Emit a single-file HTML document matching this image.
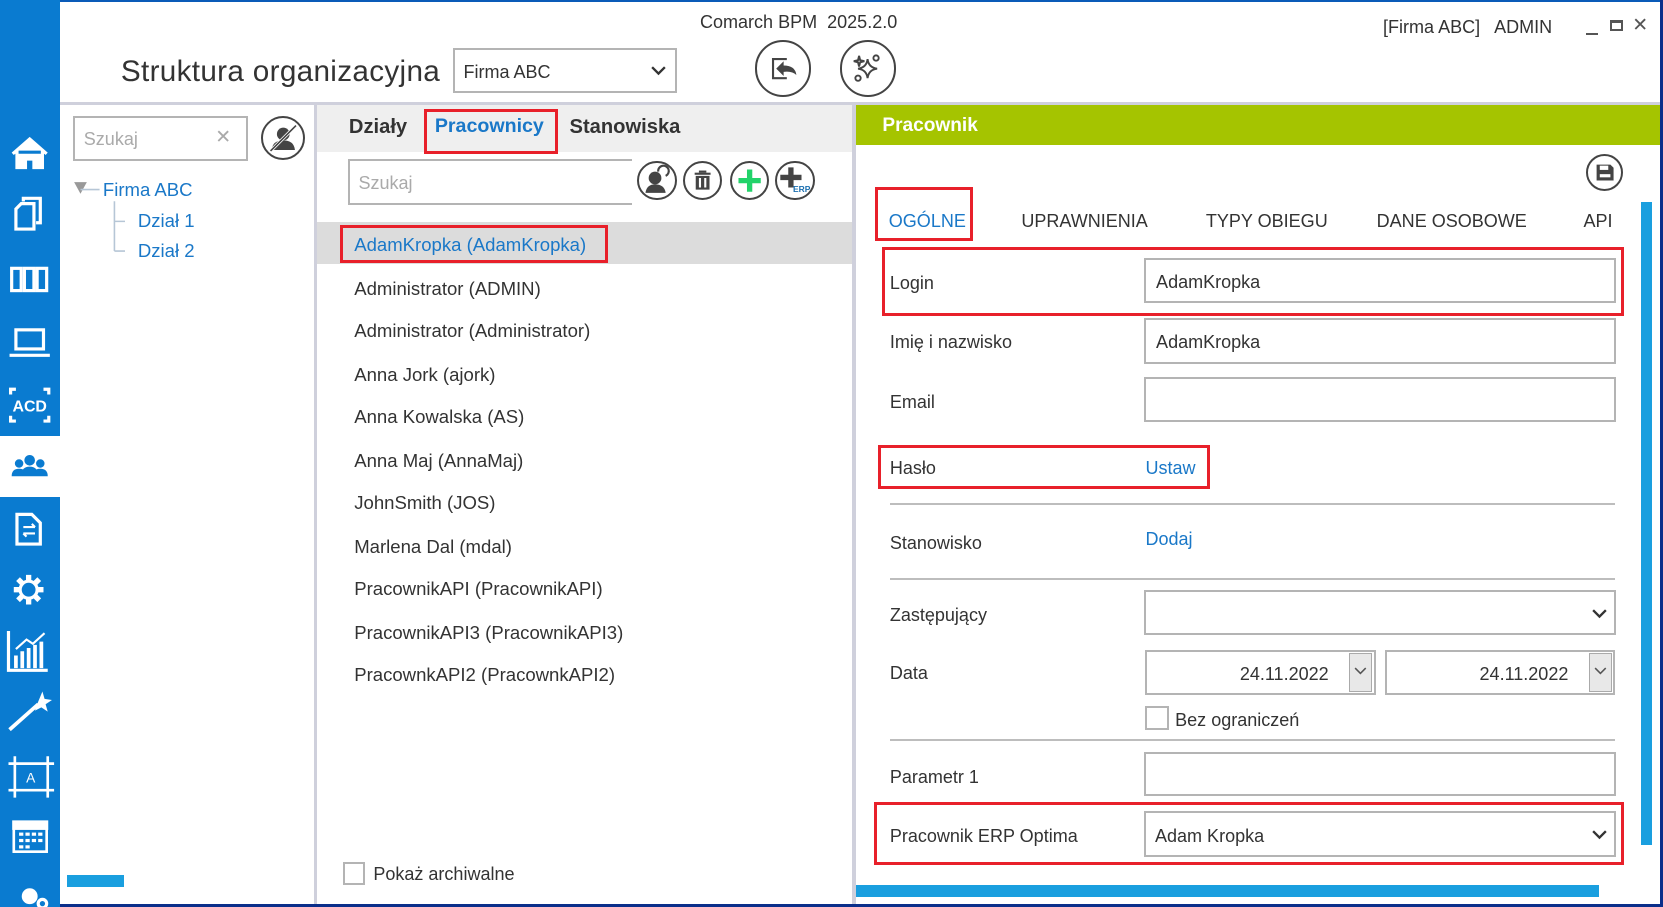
<!DOCTYPE html>
<html><head><meta charset="utf-8">
<style>
html,body{margin:0;padding:0;width:1663px;height:907px;overflow:hidden;background:#fff;}
#w{position:relative;width:1568px;height:855px;zoom:1.0606;font-family:"Liberation Sans",sans-serif;color:#333;overflow:hidden;background:#fff;}
.a{position:absolute;}
.t{position:absolute;white-space:nowrap;line-height:1;}
.inp{position:absolute;border:2px solid #b4b4b4;box-sizing:border-box;background:#fff;}
.red{position:absolute;border:3px solid #e8202a;box-sizing:border-box;}
.circ{position:absolute;border:2px solid #444;border-radius:50%;box-sizing:border-box;background:#fff;}
.lbl{position:absolute;font-size:17px;color:#333;white-space:nowrap;}
.hr{position:absolute;height:2px;background:#bdbdbd;left:839px;width:684px;}
.li{position:absolute;left:334px;font-size:17.5px;color:#333;white-space:nowrap;}
</style></head><body><div id="w">
<div class="a" style="left:0;top:0;width:1568px;height:2px;background:#0a5bb8"></div>
<div class="a" style="left:0;top:852px;width:1568px;height:3px;background:#0a2e8a"></div>
<div class="a" style="left:1565px;top:0;width:3px;height:855px;background:#0a2e8a"></div>
<div class="a" style="left:0;top:0;width:57px;height:855px;background:#0a7bd0"></div>
<div class="a" style="left:0;top:411px;width:57px;height:58px;background:#fff"></div>
<svg class="a" style="left:0;top:0" width="57" height="855" fill="none" stroke="#fff" stroke-width="3">
<path d="M12 145 L28 131 L44 145 M16 142 V158 H24 V150 H32 V158 H40 V142" fill="#fff"/>
<path d="M15 197 L20 192 H32 V216 H15 Z"/><path d="M22 190 V187 H38 V210 H34"/>
<rect x="11" y="253" width="9" height="21"/><rect x="23" y="253" width="9" height="21"/><rect x="35" y="253" width="9" height="21"/>
<rect x="15" y="311" width="26" height="18"/><path d="M9 335 H47"/>
<path d="M10 372 V367 H15 M41 367 H46 V372 M10 392 V397 H15 M41 397 H46 V392"/>
<text x="28" y="388" fill="#fff" stroke="none" font-size="15" font-weight="bold" font-family="Liberation Sans" text-anchor="middle">ACD</text>
<g fill="#0a7bd0" stroke="none"><circle cx="28" cy="434" r="5"/><circle cx="18" cy="437" r="4"/><circle cx="38" cy="437" r="4"/><path d="M20 449 Q20 440 28 440 Q36 440 36 449Z"/><path d="M11 449 Q11 442 18 442 Q22 442 23 444 L20 449Z"/><path d="M45 449 Q45 442 38 442 Q34 442 33 444 L36 449Z"/></g>
<path d="M16 485 H30 L38 493 V513 H16 Z"/><path d="M22 497 H33 M30 494 L33 497 M33 503 H22 M25 506 L22 503" stroke-width="2"/>
<circle cx="27" cy="556" r="8"/><path d="M27 542 V547 M27 565 V570 M13 556 H18 M36 556 H41 M17 546 L21 550 M33 562 L37 566 M17 566 L21 562 M33 550 L37 546" stroke-width="5"/>
<path d="M8 595 V632 H45"/><path d="M15 630 V618 M21 630 V614 M27 630 V611 M33 630 V608 M39 630 V605" stroke-width="3.5"/><path d="M15 612 L25 603 L31 607 L42 597" stroke-width="2"/>
<path d="M9 688 L36 664" stroke-width="3.5"/><path d="M40 652 L42 659 L49 660 L43 664 L45 671 L39 667 L33 670 L35 664 Z" fill="#fff" stroke="none"/>
<path d="M8 720 H51 M8 745 H51 M14 713 V752 M45 713 V752" stroke-width="2.5"/><text x="29" y="738" fill="#fff" stroke="none" font-size="13" font-family="Liberation Sans" text-anchor="middle">A</text>
<rect x="13" y="775" width="31" height="28" stroke-width="2.5"/><rect x="13" y="775" width="31" height="6" fill="#fff"/>
<g fill="#fff" stroke="none"><rect x="18" y="785" width="4" height="3"/><rect x="24" y="785" width="4" height="3"/><rect x="30" y="785" width="4" height="3"/><rect x="36" y="785" width="4" height="3"/><rect x="18" y="791" width="4" height="3"/><rect x="24" y="791" width="4" height="3"/><rect x="30" y="791" width="4" height="3"/><rect x="36" y="791" width="4" height="3"/><rect x="18" y="797" width="4" height="3"/><rect x="24" y="797" width="4" height="3"/></g>
<circle cx="28" cy="845" r="6" fill="#fff"/><circle cx="40" cy="852" r="4"/>
</svg>
<div class="t" style="left:660px;top:12px;font-size:17px;color:#333">Comarch BPM&nbsp; 2025.2.0</div>
<div class="t" style="left:114px;top:54px;font-size:28px;color:#333;letter-spacing:0.3px">Struktura organizacyjna</div>
<div class="inp" style="left:427px;top:45px;width:211px;height:43px"></div>
<div class="t" style="left:437px;top:59px;font-size:17px">Firma ABC</div>
<svg class="a" style="left:613px;top:60px" width="16" height="12"><path d="M2 3 L8 9 L14 3" stroke="#333" stroke-width="2.2" fill="none"/></svg>
<div class="circ" style="left:712px;top:38px;width:53px;height:53px"></div>
<svg class="a" style="left:712px;top:38px" width="53" height="53" fill="none" stroke="#444" stroke-width="2"><path d="M30 18 H17 V36 H30"/><path d="M20 27 L27 20 V24 Q38 24 39 33 Q35 29 27 30 V34 Z" fill="#444" stroke="none"/></svg>
<div class="circ" style="left:792px;top:38px;width:53px;height:53px"></div>
<svg class="a" style="left:792px;top:38px" width="53" height="53" fill="none" stroke="#444" stroke-width="1.8"><path d="M26 18 Q27 26 35 27 Q27 28 26 36 Q25 28 17 27 Q25 26 26 18Z"/><circle cx="34" cy="17" r="2.5"/><circle cx="17" cy="36" r="2.5"/><path d="M18 15 L19 19 L23 20 L19 21 L18 25 L17 21 L13 20 L17 19Z"/></svg>
<div class="t" style="left:1304px;top:17px;font-size:17px">[Firma ABC]&nbsp;&nbsp; ADMIN</div>
<div class="a" style="left:1495px;top:31px;width:12px;height:2px;background:#555"></div>
<div class="a" style="left:1518px;top:19px;width:12px;height:10px;border:2px solid #555;border-top-width:3px;box-sizing:border-box"></div>
<div class="t" style="left:1539px;top:15px;font-size:18px;color:#555">✕</div>
<div class="a" style="left:57px;top:96px;width:1508px;height:3px;background:#cfd0dc"></div>
<div class="a" style="left:296px;top:99px;width:3px;height:753px;background:#cfd0dc"></div>
<div class="a" style="left:803px;top:99px;width:4px;height:753px;background:#cfd0dc"></div>
<div class="inp" style="left:69px;top:109px;width:165px;height:43px"></div>
<div class="t" style="left:79px;top:123px;font-size:17px;color:#aaa">Szukaj</div>
<div class="t" style="left:203px;top:121px;font-size:18px;color:#aaa">✕</div>
<div class="circ" style="left:246px;top:109px;width:42px;height:42px"></div>
<svg class="a" style="left:246px;top:109px" width="42" height="42"><circle cx="21" cy="17" r="6" fill="#444"/><path d="M10 32 Q11 23 21 23 Q31 23 32 32Z" fill="#444"/><path d="M9 33 L33 9" stroke="#fff" stroke-width="3"/><path d="M9 33 L33 9" stroke="#444" stroke-width="1.5"/></svg>
<svg class="a" style="left:68px;top:170px" width="50" height="70" fill="none" stroke="#b6c6d6" stroke-width="1.5"><path d="M2 2 H14 L8 13Z" fill="#999" stroke="none"/><path d="M8 9 H26"/><path d="M40 20 V67 M40 39 H60 M40 67 H60"/></svg>
<div class="t" style="left:97px;top:171px;font-size:17.5px;color:#1a78c8">Firma ABC</div>
<div class="t" style="left:130px;top:200px;font-size:17.5px;color:#1a78c8">Dział 1</div>
<div class="t" style="left:130px;top:228px;font-size:17.5px;color:#1a78c8">Dział 2</div>
<div class="a" style="left:63px;top:825px;width:54px;height:11px;background:#1a9fdf"></div>
<div class="a" style="left:299px;top:99px;width:504px;height:44px;background:#efefef"></div>
<div class="t" style="left:329px;top:110px;font-size:19px;font-weight:bold;color:#333">Działy</div>
<div class="t" style="left:410px;top:110px;font-size:18.5px;font-weight:bold;color:#1a78c8">Pracownicy</div>
<div class="t" style="left:537px;top:110px;font-size:19px;font-weight:bold;color:#333">Stanowiska</div>
<div class="red" style="left:400px;top:103px;width:126px;height:42px"></div>
<div class="inp" style="left:328px;top:150px;width:268px;height:43px;border-right:none"></div>
<div class="t" style="left:338px;top:164px;font-size:17px;color:#aaa">Szukaj</div>
<div class="circ" style="left:601px;top:152px;width:37px;height:37px"></div>
<svg class="a" style="left:601px;top:152px" width="37" height="37"><circle cx="17" cy="16" r="6" fill="#444"/><path d="M8 30 Q9 22 17 22 Q26 22 27 30Z" fill="#444"/><path d="M20 10 A5 5 0 1 1 27 14" stroke="#444" stroke-width="2" fill="none"/></svg>
<div class="circ" style="left:644px;top:152px;width:37px;height:37px"></div>
<svg class="a" style="left:644px;top:152px" width="37" height="37" fill="#444"><rect x="11" y="11" width="15" height="2"/><rect x="15" y="9" width="7" height="2"/><path d="M12 14 H25 V27 H12Z M15 16 V25 H17 V16Z M20 16 V25 H22 V16Z" fill-rule="evenodd"/></svg>
<div class="circ" style="left:688px;top:152px;width:37px;height:37px"></div>
<svg class="a" style="left:688px;top:152px" width="37" height="37"><path d="M18.5 8 V29 M8 18.5 H29" stroke="#22d36a" stroke-width="5"/></svg>
<div class="circ" style="left:731px;top:152px;width:37px;height:37px"></div>
<svg class="a" style="left:731px;top:152px" width="37" height="37"><path d="M15 6 V25 M5 15.5 H25" stroke="#444" stroke-width="5"/><text x="17" y="29" font-size="8" font-weight="bold" fill="#1a6fb0" font-family="Liberation Sans">ERP</text></svg>
<div class="a" style="left:299px;top:209px;width:504px;height:40px;background:#dcdcdc"></div>
<div class="red" style="left:321px;top:212px;width:252px;height:36px"></div>
<div class="li" style="top:221px;color:#1a78c8">AdamKropka (AdamKropka)</div>
<div class="li" style="top:262px">Administrator (ADMIN)</div>
<div class="li" style="top:302px">Administrator (Administrator)</div>
<div class="li" style="top:343px">Anna Jork (ajork)</div>
<div class="li" style="top:383px">Anna Kowalska (AS)</div>
<div class="li" style="top:424px">Anna Maj (AnnaMaj)</div>
<div class="li" style="top:464px">JohnSmith (JOS)</div>
<div class="li" style="top:505px">Marlena Dal (mdal)</div>
<div class="li" style="top:545px">PracownikAPI (PracownikAPI)</div>
<div class="li" style="top:586px">PracownikAPI3 (PracownikAPI3)</div>
<div class="li" style="top:626px">PracownkAPI2 (PracownkAPI2)</div>
<div class="inp" style="left:323px;top:813px;width:21px;height:21px"></div>
<div class="t" style="left:352px;top:816px;font-size:17px">Pokaż archiwalne</div>
<div class="a" style="left:807px;top:99px;width:758px;height:38px;background:#a5c400"></div>
<div class="t" style="left:832px;top:109px;font-size:18px;font-weight:bold;color:#fff">Pracownik</div>
<div class="circ" style="left:1495px;top:145px;width:35px;height:35px"></div>
<svg class="a" style="left:1495px;top:145px" width="35" height="35"><path d="M10 10 H23 L26 13 V25 H10Z" fill="#444"/><rect x="13" y="11" width="8" height="4" fill="#fff"/><rect x="13" y="19" width="10" height="3" fill="#fff"/></svg>
<div class="a" style="left:1547px;top:190px;width:11px;height:607px;background:#1a9fdf"></div>
<div class="t" style="left:838px;top:200px;font-size:17px;color:#1a78c8">OGÓLNE</div>
<div class="t" style="left:963px;top:200px;font-size:17px">UPRAWNIENIA</div>
<div class="t" style="left:1137px;top:200px;font-size:17px">TYPY OBIEGU</div>
<div class="t" style="left:1298px;top:200px;font-size:17px">DANE OSOBOWE</div>
<div class="t" style="left:1493px;top:200px;font-size:17px">API</div>
<div class="red" style="left:825px;top:176px;width:92px;height:51px"></div>
<div class="lbl" style="left:839px;top:257px">Login</div>
<div class="inp" style="left:1079px;top:243px;width:445px;height:43px"></div>
<div class="t" style="left:1090px;top:257px;font-size:17px">AdamKropka</div>
<div class="red" style="left:832px;top:233px;width:699px;height:65px"></div>
<div class="lbl" style="left:839px;top:313px">Imię i nazwisko</div>
<div class="inp" style="left:1079px;top:300px;width:445px;height:43px"></div>
<div class="t" style="left:1090px;top:314px;font-size:17px">AdamKropka</div>
<div class="lbl" style="left:839px;top:370px">Email</div>
<div class="inp" style="left:1079px;top:355px;width:445px;height:43px"></div>
<div class="lbl" style="left:839px;top:432px">Hasło</div>
<div class="t" style="left:1080px;top:433px;font-size:17px;color:#1a78c8">Ustaw</div>
<div class="red" style="left:828px;top:420px;width:313px;height:41px"></div>
<div class="hr" style="top:474px"></div>
<div class="lbl" style="left:839px;top:503px">Stanowisko</div>
<div class="t" style="left:1080px;top:500px;font-size:17px;color:#1a78c8">Dodaj</div>
<div class="hr" style="top:545px"></div>
<div class="lbl" style="left:839px;top:570px">Zastępujący</div>
<div class="inp" style="left:1079px;top:556px;width:445px;height:43px"></div>
<svg class="a" style="left:1500px;top:572px" width="16" height="12"><path d="M2 3 L8 9 L14 3" stroke="#333" stroke-width="2.2" fill="none"/></svg>
<div class="lbl" style="left:839px;top:625px">Data</div>
<div class="inp" style="left:1080px;top:613px;width:217px;height:42px"></div>
<div class="t" style="left:1169px;top:627px;font-size:17px">24.11.2022</div>
<div class="a" style="left:1272px;top:616px;width:22px;height:36px;background:#e8e8e8;border:1px solid #aaa;box-sizing:border-box"></div>
<svg class="a" style="left:1276px;top:628px" width="14" height="10"><path d="M2 2 L7 7 L12 2" stroke="#555" stroke-width="1.5" fill="none"/></svg>
<div class="inp" style="left:1306px;top:613px;width:217px;height:42px"></div>
<div class="t" style="left:1395px;top:627px;font-size:17px">24.11.2022</div>
<div class="a" style="left:1498px;top:616px;width:22px;height:36px;background:#e8e8e8;border:1px solid #aaa;box-sizing:border-box"></div>
<svg class="a" style="left:1502px;top:628px" width="14" height="10"><path d="M2 2 L7 7 L12 2" stroke="#555" stroke-width="1.5" fill="none"/></svg>
<div class="inp" style="left:1080px;top:666px;width:22px;height:22px"></div>
<div class="t" style="left:1108px;top:670px;font-size:17px">Bez ograniczeń</div>
<div class="hr" style="top:697px"></div>
<div class="lbl" style="left:839px;top:723px">Parametr 1</div>
<div class="inp" style="left:1079px;top:709px;width:445px;height:42px"></div>
<div class="lbl" style="left:839px;top:779px">Pracownik ERP Optima</div>
<div class="inp" style="left:1079px;top:765px;width:445px;height:43px"></div>
<div class="t" style="left:1089px;top:780px;font-size:17px">Adam Kropka</div>
<svg class="a" style="left:1500px;top:781px" width="16" height="12"><path d="M2 3 L8 9 L14 3" stroke="#333" stroke-width="2.2" fill="none"/></svg>
<div class="red" style="left:824px;top:756px;width:707px;height:60px"></div>
<div class="a" style="left:807px;top:834px;width:701px;height:12px;background:#1a9fdf"></div>
</div></body></html>
